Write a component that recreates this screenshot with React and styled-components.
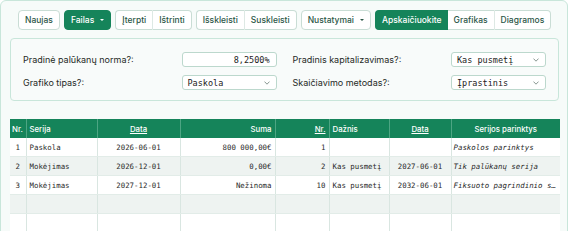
import React from "react";
import styled, { createGlobalStyle, css } from "styled-components";

const GREEN = "#15845a";
const MONO = `"DejaVu Sans Mono", "Liberation Mono", monospace`;

const Global = createGlobalStyle`
  html, body { margin: 0; padding: 0; background: #ffffff; }
  body { font-family: Inter, "Noto Sans", sans-serif; color: #1e2a25; }
`;

const Page = styled.div`
  padding: 0 2px 0 0;
  height: 231px;
  overflow: hidden;
`;

const Shell = styled.div`
  border: 1px solid #c8e6da;
  border-radius: 6px;
  background: #f6fbf9;
  padding: 9px 8px 0 9px;
  height: 300px;
`;

const Toolbar = styled.div`
  display: flex;
  gap: 4px;
  padding: 0 8px;
  height: 20px;
`;

const Group = styled.div`
  display: flex;
  & > button:not(:first-child) { border-top-left-radius: 0; border-bottom-left-radius: 0; border-left: 1px solid #dde9e4; }
  & > button:not(:last-child) { border-top-right-radius: 0; border-bottom-right-radius: 0; border-right: none; }
  & > button.active + button { border-left: none; }
`;

const Btn = styled.button`
  height: 20px;
  padding: 0 6px;
  font-family: Inter, "Noto Sans", sans-serif;
  font-size: 8.5px;
  font-weight: 500;
  border-radius: 4px;
  border: 1px solid #c9ddd5;
  background: #ffffff;
  color: #2b5647;
  display: flex;
  align-items: center;
  gap: 6px;
  white-space: nowrap;
  ${p => p.$active && css`
    background: ${GREEN};
    border-color: ${GREEN};
    color: #ffffff;
  `}
`;

const Caret = styled.span`
  width: 0;
  height: 0;
  border-left: 2px solid transparent;
  border-right: 2px solid transparent;
  border-top: 2px solid currentColor;
`;

const Settings = styled.div`
  margin-top: 8px;
  border: 1px solid #c8e6da;
  border-radius: 4px;
  background: #f8fbfa;
  padding: 13px 12px 10px;
  display: grid;
  grid-template-columns: 1fr 1fr;
  column-gap: 16px;
  row-gap: 8px;
`;

const Field = styled.div`
  display: flex;
  align-items: center;
  justify-content: space-between;
  height: 15px;
`;

const Label = styled.span`
  font-size: 9px;
  color: #1f2a26;
`;

const Input = styled.div`
  width: 95px;
  height: 15px;
  box-sizing: border-box;
  border: 1px solid #bcd8cd;
  border-radius: 3px;
  background: #ffffff;
  font-family: ${MONO};
  font-size: 8.5px;
  color: #222;
  display: flex;
  align-items: center;
  justify-content: ${p => (p.$right ? "flex-end" : "space-between")};
  padding: 0 6px 0 5px;
`;

const Chevron = () => (
  <svg width="6" height="4" viewBox="0 0 6 4">
    <path d="M0.5 0.6 L3 3.2 L5.5 0.6" fill="none" stroke="#6b7c75" strokeWidth="0.8" />
  </svg>
);

const Grid = styled.table`
  margin-top: 18px;
  width: 550px;
  border-collapse: collapse;
  table-layout: fixed;
  font-size: 7.4px;
`;

const Th = styled.th`
  background: ${GREEN};
  color: #ffffff;
  font-family: Inter, "Noto Sans", sans-serif;
  font-weight: 500;
  font-size: 7.8px;
  height: 19px;
  padding: 0 3px;
  text-align: ${p => p.$align || "left"};
  border-right: 1px solid #4da583;
  text-decoration: ${p => (p.$link ? "underline" : "none")};
  &:first-child { padding: 0 2px; }
  &:last-child { border-right: none; }
`;

const Tr = styled.tr`
  background: ${p => (p.$shade ? "#eef3f1" : "#ffffff")};
`;

const Td = styled.td`
  height: 18px;
  padding: 0 3px;
  font-family: ${MONO};
  font-size: 7.4px;
  color: #2a2a2a;
  text-align: ${p => p.$align || "left"};
  font-style: ${p => (p.$italic ? "italic" : "normal")};
  border-right: 1px solid #d9e6e1;
  border-bottom: 1px solid #e2ece8;
  white-space: nowrap;
  overflow: hidden;
  text-overflow: ellipsis;
  &:last-child { border-right: none; padding: 0 2px; }
`;

const cols = [16, 71, 83, 95, 54, 60, 62, 109];

const rows = [
  ["1", "Paskola", "2026-06-01", "800 000,00€", "1", "", "", "Paskolos parinktys"],
  ["2", "Mokėjimas", "2026-12-01", "0,00€", "2", "Kas pusmetį", "2027-06-01", "Tik palūkanų serija"],
  ["3", "Mokėjimas", "2027-12-01", "Nežinoma", "10", "Kas pusmetį", "2032-06-01", "Fiksuoto pagrindinio sumos mokėjimai"],
  ["", "", "", "", "", "", "", ""],
  ["", "", "", "", "", "", "", ""],
];

const aligns = ["center", "left", "center", "right", "right", "left", "center", "left"];

export default function App() {
  return (
    <Page>
      <Global />
      <Shell>
        <Toolbar>
          <Btn>Naujas</Btn>
          <Btn $active>Failas <Caret /></Btn>
          <Group>
            <Btn>Įterpti</Btn>
            <Btn>Ištrinti</Btn>
          </Group>
          <Group>
            <Btn>Išskleisti</Btn>
            <Btn>Suskleisti</Btn>
          </Group>
          <Btn>Nustatymai <Caret /></Btn>
          <Group>
            <Btn $active className="active">Apskaičiuokite</Btn>
            <Btn>Grafikas</Btn>
            <Btn>Diagramos</Btn>
          </Group>
        </Toolbar>
        <Settings>
          <Field>
            <Label>Pradinė palūkanų norma?:</Label>
            <Input $right>8,2500%</Input>
          </Field>
          <Field>
            <Label>Pradinis kapitalizavimas?:</Label>
            <Input>Kas pusmetį <Chevron /></Input>
          </Field>
          <Field>
            <Label>Grafiko tipas?:</Label>
            <Input>Paskola <Chevron /></Input>
          </Field>
          <Field>
            <Label>Skaičiavimo metodas?:</Label>
            <Input>Įprastinis <Chevron /></Input>
          </Field>
        </Settings>
        <Grid>
          <colgroup>
            {cols.map((w, i) => <col key={i} style={{ width: w }} />)}
          </colgroup>
          <thead>
            <tr>
              <Th>Nr.</Th>
              <Th>Serija</Th>
              <Th $align="center" $link>Data</Th>
              <Th $align="right">Suma</Th>
              <Th $align="right" $link>Nr.</Th>
              <Th>Dažnis</Th>
              <Th $align="center" $link>Data</Th>
              <Th $align="center">Serijos parinktys</Th>
            </tr>
          </thead>
          <tbody>
            {rows.map((r, i) => (
              <Tr key={i} $shade={i % 2 === 1}>
                {r.map((c, j) => (
                  <Td key={j} $align={aligns[j]} $italic={j === 7}>{c}</Td>
                ))}
              </Tr>
            ))}
          </tbody>
        </Grid>
      </Shell>
    </Page>
  );
}
